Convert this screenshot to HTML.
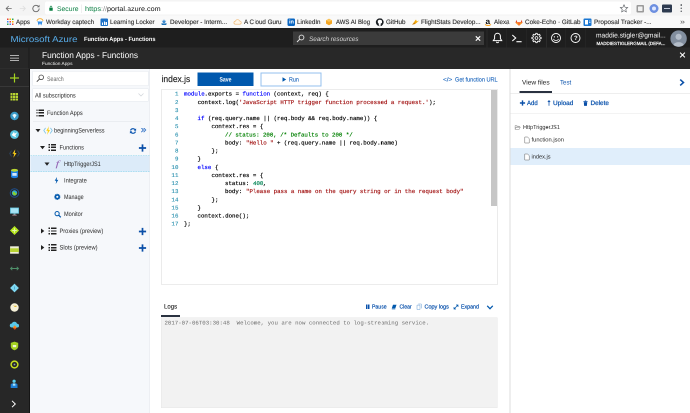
<!DOCTYPE html>
<html><head><meta charset="utf-8"><title>Function Apps - Microsoft Azure</title>
<style>
html,body{margin:0;padding:0;}
body{width:690px;height:413px;position:relative;overflow:hidden;background:#fff;font-family:"Liberation Sans", sans-serif;}
#wrap{will-change:transform;position:absolute;left:0;top:0;width:1380px;height:826px;transform:scale(0.5);transform-origin:0 0;overflow:hidden;}
#root{position:absolute;left:0;top:0;width:690px;height:413px;overflow:hidden;zoom:2;}
#root div,#root span,#root svg{position:absolute;}
#root span{white-space:pre;transform-origin:0 50%;text-rendering:geometricPrecision;}
#root div{box-sizing:border-box;}
</style></head><body><div id="wrap"><div id="root">
<div style="left:0px;top:0px;width:690px;height:15.5px;background:#f4f4f4;"></div>
<div style="left:0px;top:15.5px;width:690px;height:12.4px;background:#f9f9f9;"></div>
<div style="left:45px;top:1.5px;width:586px;height:13px;background:#ffffff;border-radius:2px;"></div>
<div style="left:81.5px;top:4.5px;width:0.5px;height:8.5px;background:#e0e0e0;"></div>
<div style="left:636.5px;top:5px;width:7.5px;height:7.5px;background:#9a9a9a;border-radius:1px;"></div>
<div style="left:638px;top:6.5px;width:4.5px;height:4.5px;background:#f0f0f0;border-radius:0.5px;"></div>
<div style="left:649.5px;top:4px;width:9px;height:9px;background:#6d8fe0;border-radius:5px;"></div>
<div style="left:652px;top:6.5px;width:4px;height:4px;background:#dfe8ff;border-radius:2px;"></div>
<div style="left:662px;top:4.5px;width:10px;height:8px;background:#2d3a4f;border-radius:1px;"></div>
<div style="left:664px;top:8px;width:6px;height:1px;background:#c0c8d8;"></div>
<div style="left:680.3px;top:4.2px;width:1.6px;height:1.6px;background:#5f6368;border-radius:1px;"></div>
<div style="left:680.3px;top:7.4px;width:1.6px;height:1.6px;background:#5f6368;border-radius:1px;"></div>
<div style="left:680.3px;top:10.6px;width:1.6px;height:1.6px;background:#5f6368;border-radius:1px;"></div>
<div style="left:7.0px;top:18.5px;width:1.6px;height:1.6px;background:#ea4335;"></div>
<div style="left:9.4px;top:18.5px;width:1.6px;height:1.6px;background:#fbbc05;"></div>
<div style="left:11.8px;top:18.5px;width:1.6px;height:1.6px;background:#34a853;"></div>
<div style="left:7.0px;top:20.9px;width:1.6px;height:1.6px;background:#4285f4;"></div>
<div style="left:9.4px;top:20.9px;width:1.6px;height:1.6px;background:#ea4335;"></div>
<div style="left:11.8px;top:20.9px;width:1.6px;height:1.6px;background:#fbbc05;"></div>
<div style="left:7.0px;top:23.3px;width:1.6px;height:1.6px;background:#34a853;"></div>
<div style="left:9.4px;top:23.3px;width:1.6px;height:1.6px;background:#4285f4;"></div>
<div style="left:11.8px;top:23.3px;width:1.6px;height:1.6px;background:#ea4335;"></div>
<div style="left:100.5px;top:18.5px;width:7.5px;height:7.5px;background:#1d72c8;border-radius:1px;"></div>
<div style="left:102px;top:22.5px;width:1.2px;height:2.5px;background:#fff;"></div>
<div style="left:103.8px;top:21.3px;width:1.2px;height:3.7px;background:#fff;"></div>
<div style="left:105.6px;top:22px;width:1.2px;height:3px;background:#fff;"></div>
<div style="left:287.5px;top:18.5px;width:7.5px;height:7.5px;background:#0a66c2;border-radius:1.2px;"></div>
<div style="left:583.5px;top:18.5px;width:8px;height:7.5px;background:#1976d2;border-radius:1px;"></div>
<div style="left:585px;top:20px;width:3.2px;height:4.5px;background:#fff;"></div>
<div style="left:589px;top:20.5px;width:1.5px;height:1px;background:#bcd9f5;"></div>
<div style="left:589px;top:22.2px;width:1.5px;height:1px;background:#bcd9f5;"></div>
<div style="left:0px;top:28.1px;width:690px;height:19.6px;background:#1e1e1e;"></div>
<div style="left:0px;top:47.6px;width:690px;height:21.2px;background:#282828;"></div>
<div style="left:0px;top:47.6px;width:28.8px;height:366px;background:#272727;"></div>
<div style="left:28.6px;top:47.6px;width:0.7px;height:21.2px;background:#1a1a1a;"></div>
<div style="left:293px;top:31.5px;width:191px;height:13.5px;background:#3b3b3b;"></div>
<div style="left:486.7px;top:28px;width:0.6px;height:19.6px;background:#2b2b2b;"></div>
<div style="left:505.9px;top:28px;width:0.6px;height:19.6px;background:#2b2b2b;"></div>
<div style="left:526.1px;top:28px;width:0.6px;height:19.6px;background:#2b2b2b;"></div>
<div style="left:546.2px;top:28px;width:0.6px;height:19.6px;background:#2b2b2b;"></div>
<div style="left:564.9000000000001px;top:28px;width:0.6px;height:19.6px;background:#2b2b2b;"></div>
<div style="left:585.4000000000001px;top:28px;width:0.6px;height:19.6px;background:#2b2b2b;"></div>
<div style="left:0px;top:68.5px;width:29px;height:0.6px;background:#333333;"></div>
<div style="left:0px;top:86.2px;width:29px;height:0.6px;background:#383838;"></div>
<div style="left:10.5px;top:93.1px;width:2.2px;height:2.2px;background:#b8d432;"></div>
<div style="left:13.2px;top:93.1px;width:2.2px;height:2.2px;background:#b8d432;"></div>
<div style="left:15.9px;top:93.1px;width:2.2px;height:2.2px;background:#b8d432;"></div>
<div style="left:10.5px;top:95.8px;width:2.2px;height:2.2px;background:#b8d432;"></div>
<div style="left:13.2px;top:95.8px;width:2.2px;height:2.2px;background:#b8d432;"></div>
<div style="left:15.9px;top:95.8px;width:2.2px;height:2.2px;background:#b8d432;"></div>
<div style="left:10.5px;top:98.5px;width:2.2px;height:2.2px;background:#b8d432;"></div>
<div style="left:13.2px;top:98.5px;width:2.2px;height:2.2px;background:#b8d432;"></div>
<div style="left:15.9px;top:98.5px;width:2.2px;height:2.2px;background:#b8d432;"></div>
<div style="left:28.8px;top:68.8px;width:1.2px;height:345px;background:#151515;"></div>
<div style="left:30px;top:68.8px;width:119.5px;height:345px;background:#f6f8fb;"></div>
<div style="left:149.5px;top:69px;width:0.6px;height:344px;background:#e4e7ec;"></div>
<div style="left:32.5px;top:71px;width:116px;height:15px;background:#ffffff;border:0.5px solid #e4e8ee;"></div>
<div style="left:32.5px;top:88.3px;width:116px;height:13.2px;background:#ffffff;border:0.5px solid #e4e8ee;"></div>
<div style="left:36.3px;top:109.5px;width:1.4px;height:1.4px;background:#222;"></div>
<div style="left:38.599999999999994px;top:109.5px;width:5.4px;height:1.4px;background:#222;"></div>
<div style="left:36.3px;top:112.2px;width:1.4px;height:1.4px;background:#222;"></div>
<div style="left:38.599999999999994px;top:112.2px;width:5.4px;height:1.4px;background:#222;"></div>
<div style="left:36.3px;top:114.9px;width:1.4px;height:1.4px;background:#222;"></div>
<div style="left:38.599999999999994px;top:114.9px;width:5.4px;height:1.4px;background:#222;"></div>
<div style="left:33px;top:121px;width:108px;height:0.5px;background:#dfe3e8;"></div>
<div style="left:48.5px;top:144.0px;width:1.4px;height:1.4px;background:#222;"></div>
<div style="left:50.8px;top:144.0px;width:5.4px;height:1.4px;background:#222;"></div>
<div style="left:48.5px;top:146.7px;width:1.4px;height:1.4px;background:#222;"></div>
<div style="left:50.8px;top:146.7px;width:5.4px;height:1.4px;background:#222;"></div>
<div style="left:48.5px;top:149.4px;width:1.4px;height:1.4px;background:#222;"></div>
<div style="left:50.8px;top:149.4px;width:5.4px;height:1.4px;background:#222;"></div>
<div style="left:30.3px;top:155.5px;width:119.2px;height:16.4px;background:#dcebf9;border-top:0.8px dashed #7fd3ea;border-bottom:0.8px dashed #7fd3ea;"></div>
<div style="left:48.7px;top:227.6px;width:1.4px;height:1.4px;background:#222;"></div>
<div style="left:51.0px;top:227.6px;width:5.4px;height:1.4px;background:#222;"></div>
<div style="left:48.7px;top:230.29999999999998px;width:1.4px;height:1.4px;background:#222;"></div>
<div style="left:51.0px;top:230.29999999999998px;width:5.4px;height:1.4px;background:#222;"></div>
<div style="left:48.7px;top:233.0px;width:1.4px;height:1.4px;background:#222;"></div>
<div style="left:51.0px;top:233.0px;width:5.4px;height:1.4px;background:#222;"></div>
<div style="left:48.7px;top:244.2px;width:1.4px;height:1.4px;background:#222;"></div>
<div style="left:51.0px;top:244.2px;width:5.4px;height:1.4px;background:#222;"></div>
<div style="left:48.7px;top:246.89999999999998px;width:1.4px;height:1.4px;background:#222;"></div>
<div style="left:51.0px;top:246.89999999999998px;width:5.4px;height:1.4px;background:#222;"></div>
<div style="left:48.7px;top:249.6px;width:1.4px;height:1.4px;background:#222;"></div>
<div style="left:51.0px;top:249.6px;width:5.4px;height:1.4px;background:#222;"></div>
<div style="left:197.6px;top:72.4px;width:56.1px;height:13.8px;background:#0058ad;"></div>
<div style="left:260.3px;top:72.3px;width:61px;height:14px;background:#ffffff;border:1px solid #94c0ee;"></div>
<div style="left:161px;top:89.5px;width:336.8px;height:194.9px;background:#ffffff;border:0.6px solid #d8d8d8;"></div>
<div style="left:490.8px;top:90px;width:6.4px;height:116px;background:#c6c6c6;"></div>
<div style="left:161.1px;top:315px;width:18.9px;height:2px;background:#2a3240;"></div>
<div style="left:161.1px;top:317.3px;width:336.6px;height:90.5px;background:#f2f2f2;border:0.5px solid #e6e6e6;"></div>
<div style="left:366px;top:304.5px;width:1.3px;height:4.6px;background:#0a52ac;"></div>
<div style="left:368px;top:304.5px;width:1.3px;height:4.6px;background:#0a52ac;"></div>
<div style="left:509.7px;top:69px;width:0.7px;height:344px;background:#dcdcdc;"></div>
<div style="left:519.4px;top:91.1px;width:32.8px;height:1.9px;background:#2a3240;"></div>
<div style="left:510.4px;top:93.1px;width:180px;height:0.5px;background:#dcdcdc;"></div>
<div style="left:510.4px;top:113px;width:180px;height:0.5px;background:#e6e6e6;"></div>
<div style="left:510.4px;top:148.1px;width:180px;height:16.7px;background:#e0eefb;"></div>
<svg style="left:3px;top:2.7px;" width="12" height="12" viewBox="0 0 12 12"><path d="M8.700 6H3.300M5.700 3.500L3.200 6l2.500 2.500" fill="none" stroke="#6a6a6a" stroke-width="0.850"/></svg>
<svg style="left:16.5px;top:2.7px;" width="12" height="12" viewBox="0 0 12 12"><path d="M3.300 6h5.400M6.300 3.500L8.800 6 6.300 8.500" fill="none" stroke="#dedede" stroke-width="0.850"/></svg>
<svg style="left:30px;top:2.7px;" width="12" height="12" viewBox="0 0 12 12"><path d="M9.200 6a3.200 3.200 0 1 1-1-2.300" fill="none" stroke="#666" stroke-width="0.900"/><path d="M9.500 2.300v2.400H7.100z" fill="#666"/></svg>
<svg style="left:48px;top:4.5px;" width="6" height="8" viewBox="0 0 6 8"><rect x="1.300" y="3.300" width="3.400" height="3" rx="0.300" fill="#0b8043"/><path d="M2.100 3.300V2.500a.9.900 0 0 1 1.800 0v.8" fill="none" stroke="#0b8043" stroke-width="0.600"/></svg>
<svg style="left:619px;top:3.4px;" width="10" height="10" viewBox="0 0 10 10"><path d="M5 1.300l1.100 2.400 2.600.3-1.900 1.800.5 2.600L5 7.100 2.700 8.400l.5-2.600-1.900-1.800 2.600-.3z" fill="none" stroke="#5f6368" stroke-width="0.650"/></svg>
<svg style="left:36px;top:17.7px;" width="8" height="8" viewBox="0 0 8 8"><circle cx="4" cy="4" r="3.400" fill="#fff"/><path d="M.9 3.600A3.200 3.200 0 0 1 7.100 3.600" fill="none" stroke="#f5a623" stroke-width="0.800"/><path d="M1.900 3.700l1 3 1.100-2.600 1.100 2.600 1-3" fill="none" stroke="#0875e1" stroke-width="0.900"/></svg>
<svg style="left:160px;top:18px;" width="8" height="8" viewBox="0 0 8 8"><path d="M1 5.5h6l-1 1.5H2z" fill="#1b6fb5"/><path d="M4 1.2l.7 1.5 1.6.2-1.2 1.1.3 1.6L4 4.8l-1.4.8.3-1.6-1.2-1.1 1.6-.2z" fill="#3a8ad0"/></svg>
<svg style="left:233px;top:18px;" width="9" height="8" viewBox="0 0 9 8"><path d="M2.3 6.2a1.5 1.5 0 0 1 .2-3 2.1 2.1 0 0 1 4-.2 1.6 1.6 0 0 1 .2 3.2z" fill="#fff7ea" stroke="#f0b46a" stroke-width="0.6"/></svg>
<svg style="left:325px;top:18px;" width="8" height="8" viewBox="0 0 8 8"><path d="M4 .8l3 1.6v3.2L4 7.2 1 5.6V2.4z" fill="#f5a623"/><path d="M4 .8l3 1.6L4 4 1 2.4z" fill="#fbc45a"/></svg>
<svg style="left:375.5px;top:18px;" width="8.5" height="8.5" viewBox="0 0 8.5 8.5"><circle cx="4.25" cy="4.25" r="3.9" fill="#1b1f23"/><path d="M3.2 8V6.6c-1.2.3-1.5-.6-1.5-.6M5.3 8V6.4c0-.4-.1-.7-.3-.8 1-.1 2-.5 2-2.1 0-.5-.2-.9-.5-1.2.1-.2.2-.7 0-1.100 0 0-.4-.1-1.200.5a4 4 0 0 0-2.100 0C2.400 1.100 2 1.200 2 1.200c-.2.400-.1.900 0 1.100-.3.300-.5.700-.5 1.200 0 1.600 1 2 2 2.100-.2.100-.3.400-.3.700" fill="#fff" stroke="none" opacity="0"/><circle cx="4.25" cy="3.7" r="2" fill="#fff"/><rect x="3.3" y="5" width="1.9" height="2.8" fill="#fff"/></svg>
<svg style="left:411px;top:18px;" width="9" height="8" viewBox="0 0 9 8"><path d="M1 6.8L5 1.500l.800 2L8.200 2.500 4.200 6l-.6-1.700z" fill="#f5a800"/><path d="M1 6.800l2.600-2.500.6 1.700z" fill="#c77700"/></svg>
<svg style="left:484.5px;top:24.2px;" width="7" height="2.5" viewBox="0 0 7 2.5"><path d="M.5.500c2 1.400 4 1.400 6 0" fill="none" stroke="#f90" stroke-width="0.8"/></svg>
<svg style="left:514.5px;top:18px;" width="9" height="8.5" viewBox="0 0 9 8.5"><path d="M4.500 7.800L1 4.800l.9-3 .9 2.400h3.400L7.100 1.800l.9 3z" fill="#e24329"/><path d="M4.500 7.800L2.800 4.200h3.400z" fill="#fc6d26"/><path d="M1 4.800l3.500 3-1.700-3.600zM8 4.800l-3.500 3 1.700-3.600z" fill="#fca326"/></svg>
<svg style="left:295.5px;top:33.5px;" width="10" height="10" viewBox="0 0 10 10"><circle cx="6" cy="4" r="2.400" fill="none" stroke="#e6e6e6" stroke-width="0.9"/><path d="M4.300 5.700L1.500 8.500" stroke="#e6e6e6" stroke-width="1"/></svg>
<svg style="left:474px;top:34.5px;" width="8" height="8" viewBox="0 0 8 8"><path d="M1.800 1.800l4.400 4.400M6.200 1.800L1.800 6.200" stroke="#fff" stroke-width="1.100"/></svg>
<svg style="left:491.3px;top:32px;" width="12" height="12" viewBox="0 0 12 12"><path d="M6 1.300c-1.800 0-2.900 1.300-2.900 3v2.300L1.800 8.600h8.400L8.900 6.600V4.300c0-1.700-1.100-3-2.900-3z" fill="none" stroke="#fff" stroke-width="1"/><path d="M5 9.700a1 1 0 0 0 2 0" fill="none" stroke="#fff" stroke-width="0.900"/></svg>
<svg style="left:510.8px;top:32px;" width="12" height="12" viewBox="0 0 12 12"><path d="M1.300 3l3.400 3-3.400 3" fill="none" stroke="#fff" stroke-width="1.100"/><path d="M5.400 9.700h5.200" stroke="#fff" stroke-width="1.100"/></svg>
<svg style="left:530.4px;top:32px;" width="12" height="12" viewBox="0 0 12 12"><path d="M9.40 5.15L10.64 5.26L10.64 6.74L9.40 6.85L9.00 7.80L9.80 8.76L8.76 9.80L7.80 9.00L6.85 9.40L6.74 10.64L5.26 10.64L5.15 9.40L4.20 9.00L3.24 9.80L2.20 8.76L3.00 7.80L2.60 6.85L1.36 6.74L1.36 5.26L2.60 5.15L3.00 4.20L2.20 3.24L3.24 2.20L4.20 3.00L5.15 2.60L5.26 1.36L6.74 1.36L6.85 2.60L7.80 3.00L8.76 2.20L9.80 3.24L9.00 4.20z" fill="none" stroke="#fff" stroke-width="0.850" stroke-linejoin="round"/><circle cx="6" cy="6" r="1.400" fill="none" stroke="#fff" stroke-width="0.800"/></svg>
<svg style="left:549.9px;top:32px;" width="12" height="12" viewBox="0 0 12 12"><circle cx="6" cy="6" r="4.500" fill="none" stroke="#fff" stroke-width="0.900"/><circle cx="4.400" cy="4.900" r="0.650" fill="#fff"/><circle cx="7.600" cy="4.900" r="0.650" fill="#fff"/><path d="M3.500 6.900a2.700 2.700 0 0 0 5 0" fill="none" stroke="#fff" stroke-width="0.800"/></svg>
<svg style="left:569.7px;top:32px;" width="12" height="12" viewBox="0 0 12 12"><circle cx="6" cy="6" r="4.500" fill="none" stroke="#fff" stroke-width="0.900"/></svg>
<svg style="left:670.1px;top:29.8px;" width="17.2" height="17.2" viewBox="0 0 17.2 17.2"><circle cx="8.600" cy="8.600" r="8.200" fill="#828e9e"/><circle cx="8.600" cy="6.800" r="3.100" fill="#b4bdc9"/><path d="M3.400 14.900A5.600 4.400 0 0 1 13.800 14.900A8.200 8.200 0 0 1 3.400 14.900z" fill="#b4bdc9"/></svg>
<svg style="left:9.4px;top:54px;" width="10" height="8" viewBox="0 0 10 8"><path d="M.5 1.600h9M.5 4.100h9M.5 6.600h9" stroke="#e0e0e0" stroke-width="0.700"/></svg>
<svg style="left:678px;top:50.4px;" width="9" height="9" viewBox="0 0 9 9"><path d="M2.100 2.100l4.800 4.800M6.900 2.100L2.100 6.900" stroke="#fff" stroke-width="1.050"/></svg>
<svg style="left:8.4px;top:72.2px;" width="12" height="12" viewBox="0 0 12 12"><path d="M6 1.500v9M1.500 6h9" stroke="#a4d321" stroke-width="1.200"/></svg>
<svg style="left:8.4px;top:109.8px;" width="12" height="12" viewBox="0 0 12 12"><circle cx="6" cy="6" r="4.200" fill="#3999c6"/><path d="M3.800 5l2.200-1.300L8.200 5 6 8.500z" fill="#e8f6fc"/></svg>
<svg style="left:8.4px;top:128.5px;" width="12" height="12" viewBox="0 0 12 12"><circle cx="6" cy="6" r="4.400" fill="#59c4e0"/><path d="M3.200 6.500l2.300-3.300.7 1.900 2.600-1.300-2 3.200 1.100 1.700-2.900-.9z" fill="#fff"/></svg>
<svg style="left:8.4px;top:147.5px;" width="12" height="12" viewBox="0 0 12 12"><path d="M3 3L1.200 6 3 9M9 3l1.800 3L9 9" fill="none" stroke="#2f4560" stroke-width="0.900"/><path d="M6.800 1.800L4 6.300h1.700L4.900 10.200 8 5.500H6.200z" fill="#fcd116"/></svg>
<svg style="left:8.4px;top:167.4px;" width="12" height="12" viewBox="0 0 12 12"><path d="M2.500 2.800v6.400c0 .8 1.600 1.400 3.500 1.400s3.500-.6 3.500-1.400V2.800z" fill="#1e7fe0"/><ellipse cx="6" cy="2.800" rx="3.500" ry="1.400" fill="#b8d432"/><rect x="3.800" y="5.500" width="4.400" height="2.800" fill="#e8f2ff" opacity="0.9"/></svg>
<svg style="left:8.4px;top:186.8px;" width="12" height="12" viewBox="0 0 12 12"><circle cx="6" cy="6" r="4.300" fill="none" stroke="#1f4e8c" stroke-width="1"/><circle cx="6" cy="6" r="2.700" fill="#2fa8d8"/><path d="M4.200 5.200c1-.8 2-.4 2.400.4s1.200.8 1.600 0c.3 1.500-.7 2.700-1.900 2.700S4.400 7.500 4.200 6.400z" fill="#8ad02a"/></svg>
<svg style="left:8.4px;top:205.7px;" width="12" height="12" viewBox="0 0 12 12"><rect x="1.600" y="2.100" width="8.800" height="6" fill="#6fd0ea"/><rect x="2.500" y="2.900" width="7" height="4.400" fill="#a8e4f5"/><rect x="5" y="8.100" width="2" height="1.200" fill="#8aa"/><rect x="3.800" y="9.300" width="4.400" height="0.700" fill="#c9a"/></svg>
<svg style="left:8.4px;top:224.5px;" width="12" height="12" viewBox="0 0 12 12"><path d="M6 1.500L10.500 6 6 10.500 1.500 6z" fill="#b5e61d"/><path d="M6 3.800v4.400M3.800 6h4.400" stroke="#e8f8b0" stroke-width="0.900"/></svg>
<svg style="left:8.4px;top:244.2px;" width="12" height="12" viewBox="0 0 12 12"><rect x="1.600" y="2.300" width="8.700" height="7.400" fill="#eeeed8"/><rect x="1.600" y="4.300" width="8.700" height="3.700" fill="#b8d432"/></svg>
<svg style="left:8.4px;top:262.7px;" width="12" height="12" viewBox="0 0 12 12"><path d="M2.500 6h7M3.800 4.300L2 6l1.800 1.700M8.200 4.300L10 6 8.200 7.700" fill="none" stroke="#4f8f6a" stroke-width="0.900"/></svg>
<svg style="left:8.4px;top:282.1px;" width="12" height="12" viewBox="0 0 12 12"><path d="M6 1.600L10.400 6 6 10.400 1.600 6z" fill="#7fd8f2"/><path d="M6 4.500v3" stroke="#3a9cc8" stroke-width="0.700"/></svg>
<svg style="left:8.4px;top:301.3px;" width="12" height="12" viewBox="0 0 12 12"><circle cx="6" cy="6" r="4.200" fill="#f4f0d8"/><path d="M5.800 5h2.200" stroke="#e0b020" stroke-width="0.900"/><path d="M4.500 4.300a2.500 2.500 0 0 1 3.700.5" fill="none" stroke="#e8d890" stroke-width="0.600"/></svg>
<svg style="left:8.4px;top:320px;" width="12" height="12" viewBox="0 0 12 12"><path d="M3.200 7.500a2 2 0 0 1 .2-4 2.700 2.700 0 0 1 5.100.2A1.900 1.900 0 0 1 8.800 7.500z" fill="#59c8e8"/><path d="M6.300 5.300L8.300 7.500 6.300 9.700 4.300 7.500z" fill="#f58a1f"/><path d="M6.300 7.500l1 1.100-1 1.100-1-1.100z" fill="#e03a1e"/></svg>
<svg style="left:8.4px;top:340px;" width="12" height="12" viewBox="0 0 12 12"><path d="M6 1.600l3.700 1.300v3.400c0 2-1.600 3.300-3.700 4-2.100-.7-3.700-2-3.700-4V2.900z" fill="#a4d321"/><rect x="4.300" y="5" width="3.400" height="2.200" fill="#eef8d0"/></svg>
<svg style="left:8.4px;top:358.7px;" width="12" height="12" viewBox="0 0 12 12"><circle cx="6" cy="6" r="3.400" fill="#2a2a2a" stroke="#c8e020" stroke-width="1.500"/><circle cx="6" cy="6" r="0.900" fill="#8aa0b8"/></svg>
<svg style="left:8.4px;top:378.1px;" width="12" height="12" viewBox="0 0 12 12"><circle cx="5.600" cy="3.200" r="1.600" fill="#59d0f0"/><path d="M2.200 10V6.800c0-1 1.200-1.500 3.400-1.500s3.400.5 3.400 1.500V10z" fill="#1e7fd6"/><path d="M4.300 5.500h2.600v2.200H4.300z" fill="#a8e4fa"/></svg>
<svg style="left:9px;top:399px;" width="9" height="10" viewBox="0 0 9 10"><path d="M3 1.800l3.300 3.200L3 8.200" fill="none" stroke="#fff" stroke-width="1"/></svg>
<svg style="left:35px;top:73.5px;" width="10" height="10" viewBox="0 0 10 10"><circle cx="6.200" cy="3.800" r="2.300" fill="none" stroke="#444" stroke-width="0.800"/><path d="M4.600 5.400L1.800 8.200" stroke="#444" stroke-width="0.900"/></svg>
<svg style="left:137px;top:92px;" width="8" height="6" viewBox="0 0 8 6"><path d="M1.500 1.500L4 4l2.500-2.500" fill="none" stroke="#d0d4da" stroke-width="0.700"/></svg>
<svg style="left:35px;top:128.0px;" width="6" height="5" viewBox="0 0 6 5"><path d="M.5 1h5L3 4.300z" fill="#222"/></svg>
<svg style="left:42.8px;top:125.3px;" width="10" height="10" viewBox="0 0 10 10"><path d="M2.800 2L.8 5l2 3M7.200 2l2 3-2 3" fill="none" stroke="#7cc4e8" stroke-width="0.800"/><path d="M5.900 .8L3.300 5.400h1.600L4.100 9.200 7 4.500H5.400z" fill="#fcd116"/></svg>
<svg style="left:128.9px;top:126.9px;" width="8" height="8" viewBox="0 0 8 8"><path d="M6.300 3.200A2.600 2.600 0 0 0 1.500 3.400M1.700 4.800A2.600 2.600 0 0 0 6.500 4.600" fill="none" stroke="#0a55b0" stroke-width="1.200"/><path d="M7.100 1.400v2.300H4.800zM.9 6.600V4.300h2.300z" fill="#0a55b0"/></svg>
<svg style="left:140.4px;top:126.8px;" width="6" height="6" viewBox="0 0 6 6"><path d="M.8 .8L2.900 3 .8 5.200M3.100 .8L5.200 3 3.100 5.200" fill="none" stroke="#3a78c8" stroke-width="0.950"/></svg>
<svg style="left:39.6px;top:145.0px;" width="6" height="5" viewBox="0 0 6 5"><path d="M.5 1h5L3 4.300z" fill="#222"/></svg>
<svg style="left:138.6px;top:143.8px;" width="8" height="8" viewBox="0 0 8 8"><path d="M4 .4v7.200M.4 4h7.200" stroke="#0a4fa8" stroke-width="1.700"/></svg>
<svg style="left:44px;top:161.7px;" width="6" height="5" viewBox="0 0 6 5"><path d="M.5 1h5L3 4.300z" fill="#222"/></svg>
<svg style="left:53.5px;top:176.5px;" width="6" height="8" viewBox="0 0 6 8"><path d="M3.500 .5L1.200 4.200h1.600L2.200 7.500 4.800 3.400H3.200z" fill="#0058ad"/></svg>
<svg style="left:53.9px;top:193.7px;" width="6.6" height="6.6" viewBox="0 0 6.6 6.6"><circle cx="3.300" cy="3.300" r="1.900" fill="none" stroke="#0058ad" stroke-width="1.600"/><circle cx="3.300" cy="3.300" r="2.800" fill="none" stroke="#0058ad" stroke-width="0.600" stroke-dasharray="0.900 0.850"/></svg>
<svg style="left:53.8px;top:210.3px;" width="7.5" height="7.5" viewBox="0 0 7.5 7.5"><circle cx="3.100" cy="3.100" r="2.100" fill="none" stroke="#0058ad" stroke-width="1"/><path d="M4.700 4.700l2.100 2.100" stroke="#0058ad" stroke-width="1.200"/></svg>
<svg style="left:39.8px;top:228px;" width="5" height="6" viewBox="0 0 5 6"><path d="M1 .5v5L4.300 3z" fill="#222"/></svg>
<svg style="left:138.5px;top:227.3px;" width="8" height="8" viewBox="0 0 8 8"><path d="M4 .4v7.200M.4 4h7.200" stroke="#0a4fa8" stroke-width="1.700"/></svg>
<svg style="left:39.8px;top:244.6px;" width="5" height="6" viewBox="0 0 5 6"><path d="M1 .5v5L4.300 3z" fill="#222"/></svg>
<svg style="left:138.5px;top:244px;" width="8" height="8" viewBox="0 0 8 8"><path d="M4 .4v7.200M.4 4h7.200" stroke="#0a4fa8" stroke-width="1.700"/></svg>
<svg style="left:282px;top:77px;" width="4.5" height="5" viewBox="0 0 4.5 5"><path d="M.5 .3v4.400L4.200 2.500z" fill="#0058ad"/></svg>
<svg style="left:391.5px;top:304px;" width="5.5" height="5.5" viewBox="0 0 5.5 5.5"><path d="M1.500 .8h3.500l-1.200 3.600H.3z" fill="#0058ad"/><path d="M.3 5h3.500" stroke="#0058ad" stroke-width="0.600"/></svg>
<svg style="left:416.5px;top:303.5px;" width="6" height="7" viewBox="0 0 6 7"><path d="M.5 1.600h3v4.400h-3zM1.800 .5h3v4.400" fill="none" stroke="#6a9fd4" stroke-width="0.500"/></svg>
<svg style="left:453px;top:304px;" width="6" height="6" viewBox="0 0 6 6"><path d="M1 5L5 1M3 1h2v2M1 3v2h2" fill="none" stroke="#0058ad" stroke-width="0.700"/></svg>
<svg style="left:486px;top:304.5px;" width="8" height="6" viewBox="0 0 8 6"><path d="M1.200 1.300L4 4.200l2.800-2.900" fill="none" stroke="#0058ad" stroke-width="1.200"/></svg>
<svg style="left:677.7px;top:78px;" width="8" height="9" viewBox="0 0 8 9"><path d="M2.700 1.600L6 4.500 2.700 7.400" fill="none" stroke="#0a4fa8" stroke-width="1.500"/></svg>
<svg style="left:519.4px;top:99.9px;" width="6" height="6" viewBox="0 0 6 6"><path d="M3 .4v5.200M.4 3h5.200" stroke="#0a4fa8" stroke-width="1.400"/></svg>
<svg style="left:546.6px;top:99.7px;" width="5" height="7" viewBox="0 0 5 7"><path d="M2.500 6.200V1.200M1.300 2.500L2.500 1.100l1.200 1.400" fill="none" stroke="#0a4fa8" stroke-width="0.750"/></svg>
<svg style="left:582.6px;top:99.8px;" width="6" height="7" viewBox="0 0 6 7"><path d="M1.300 2.100h3.400l-.3 3.800H1.600z" fill="#0a4fa8"/><path d="M.9 1.500h4.200M2.300 .8h1.400" stroke="#0a4fa8" stroke-width="0.650"/></svg>
<svg style="left:514.5px;top:124.3px;" width="7" height="6" viewBox="0 0 7 6"><path d="M.6 4.800V1h1.700l.5.700h2.100v.8M.6 4.800l.9-2.300h4.200l-.9 2.300z" fill="none" stroke="#777" stroke-width="0.450"/></svg>
<svg style="left:523.8px;top:136.4px;" width="6" height="7" viewBox="0 0 6 7"><path d="M.8 .5h2.800l1.600 1.600v4.400H.8z" fill="#fff" stroke="#666" stroke-width="0.500"/></svg>
<svg style="left:523.8px;top:153.6px;" width="6" height="7" viewBox="0 0 6 7"><path d="M.8 .5h2.800l1.600 1.600v4.400H.8z" fill="#fff" stroke="#666" stroke-width="0.500"/></svg>
<span style='left:57px;top:4.96px;font-size:6.7px;line-height:8.04px;color:#0b8043;transform:scaleX(1.0140);'>Secure</span>
<span style='left:85px;top:4.96px;font-size:6.7px;line-height:8.04px;color:#0b8043;transform:scaleX(1.1034);'>https</span>
<span style='left:101px;top:4.96px;font-size:6.7px;line-height:8.04px;color:#888;transform:scaleX(1.0756);'>://</span>
<span style='left:107px;top:4.96px;font-size:6.7px;line-height:8.04px;color:#111;transform:scaleX(1.0740);'>portal.azure.com</span>
<span style='left:16px;top:17.84px;font-size:6.4px;line-height:7.68px;color:#2a2a2a;transform:scaleX(0.9603);-webkit-text-stroke:0.12px;'>Apps</span>
<span style='left:46px;top:17.84px;font-size:6.4px;line-height:7.68px;color:#2a2a2a;transform:scaleX(0.9743);-webkit-text-stroke:0.12px;'>Workday captech</span>
<span style='left:110px;top:17.84px;font-size:6.4px;line-height:7.68px;color:#2a2a2a;transform:scaleX(0.9707);-webkit-text-stroke:0.12px;'>Learning Locker</span>
<span style='left:170px;top:17.84px;font-size:6.4px;line-height:7.68px;color:#2a2a2a;transform:scaleX(0.9785);-webkit-text-stroke:0.12px;'>Developer - Interm...</span>
<span style='left:244px;top:17.84px;font-size:6.4px;line-height:7.68px;color:#2a2a2a;transform:scaleX(0.9772);-webkit-text-stroke:0.12px;'>A Cloud Guru</span>
<span style='left:288.8px;top:19.11px;font-size:5.6px;line-height:6.72px;color:#fff;font-weight:bold;transform:scaleX(1.0031);'>in</span>
<span style='left:297px;top:17.84px;font-size:6.4px;line-height:7.68px;color:#2a2a2a;transform:scaleX(0.9722);-webkit-text-stroke:0.12px;'>LinkedIn</span>
<span style='left:336px;top:17.84px;font-size:6.4px;line-height:7.68px;color:#2a2a2a;transform:scaleX(0.9351);-webkit-text-stroke:0.12px;'>AWS AI Blog</span>
<span style='left:386px;top:17.84px;font-size:6.4px;line-height:7.68px;color:#2a2a2a;transform:scaleX(0.9804);-webkit-text-stroke:0.12px;'>GitHub</span>
<span style='left:421px;top:17.84px;font-size:6.4px;line-height:7.68px;color:#2a2a2a;transform:scaleX(0.9794);-webkit-text-stroke:0.12px;'>FlightStats Develop...</span>
<span style='left:485.5px;top:16.90px;font-size:8px;line-height:9.6px;color:#111;font-weight:bold;transform:scaleX(1.0330);'>a</span>
<span style='left:494px;top:17.84px;font-size:6.4px;line-height:7.68px;color:#2a2a2a;transform:scaleX(0.9688);-webkit-text-stroke:0.12px;'>Alexa</span>
<span style='left:525px;top:17.84px;font-size:6.4px;line-height:7.68px;color:#2a2a2a;transform:scaleX(0.9889);-webkit-text-stroke:0.12px;'>Coke-Echo · GitLab</span>
<span style='left:594px;top:17.84px;font-size:6.4px;line-height:7.68px;color:#2a2a2a;transform:scaleX(0.9992);-webkit-text-stroke:0.12px;'>Proposal Tracker -...</span>
<span style='left:680px;top:17.68px;font-size:7px;line-height:8.4px;color:#555;transform:scaleX(1.2800);'>»</span>
<span style='left:10.5px;top:33.79px;font-size:8.6px;line-height:10.32px;color:#5ab0ee;transform:scaleX(1.1311);'>Microsoft Azure</span>
<span style='left:83.9px;top:35.32px;font-size:6.0px;line-height:7.2px;color:#ffffff;font-weight:bold;transform:scaleX(0.9435);'>Function Apps - Functions</span>
<span style='left:308.9px;top:34.83px;font-size:6.5px;line-height:7.8px;color:#d8d8d8;font-style:italic;transform:scaleX(0.9734);'>Search resources</span>
<span style='left:573.9px;top:34.40px;font-size:6.3px;line-height:7.56px;color:#fff;font-weight:bold;transform:scaleX(0.9587);'>?</span>
<span style='left:595.8px;top:31.54px;font-size:6.9px;line-height:8.28px;color:#ffffff;transform:scaleX(0.9652);'>maddie.stigler@gmail...</span>
<span style='left:596.5px;top:40.75px;font-size:4.5px;line-height:5.4px;color:#ffffff;transform:scaleX(1.0006);-webkit-text-stroke:0.18px;'>MADDIESTIGLERGMAIL (DEFA...</span>
<span style='left:42px;top:50.55px;font-size:8.5px;line-height:10.2px;color:#ffffff;transform:scaleX(0.9768);'>Function Apps - Functions</span>
<span style='left:42.2px;top:61.15px;font-size:4.5px;line-height:5.4px;color:#f0f0f0;transform:scaleX(1.0690);'>Function Apps</span>
<span style='left:46.9px;top:75.14px;font-size:6.4px;line-height:7.68px;color:#6a6a6a;transform:scaleX(0.8247);'>Search</span>
<span style='left:35px;top:91.54px;font-size:6.4px;line-height:7.68px;color:#2b2b2b;transform:scaleX(0.8812);'>All subscriptions</span>
<span style='left:46.9px;top:108.94px;font-size:6.4px;line-height:7.68px;color:#2b2b2b;transform:scaleX(0.8790);'>Function Apps</span>
<span style='left:54.2px;top:126.69px;font-size:6.4px;line-height:7.68px;color:#2b2b2b;transform:scaleX(0.8721);'>beginningServerless</span>
<span style='left:59.3px;top:143.29px;font-size:6.4px;line-height:7.68px;color:#2b2b2b;transform:scaleX(0.8803);'>Functions</span>
<span style='left:55.6px;top:158.90px;font-size:8.5px;line-height:10.2px;color:#9565b5;font-style:italic;font-family:"Liberation Serif", serif;transform:scaleX(1.6000);'>f</span>
<span style='left:64px;top:160.04px;font-size:6.4px;line-height:7.68px;color:#2b2b2b;transform:scaleX(0.8585);'>HttpTriggerJS1</span>
<span style='left:63.8px;top:176.64px;font-size:6.4px;line-height:7.68px;color:#2b2b2b;transform:scaleX(0.9035);'>Integrate</span>
<span style='left:63.8px;top:193.24px;font-size:6.4px;line-height:7.68px;color:#2b2b2b;transform:scaleX(0.8481);'>Manage</span>
<span style='left:63.8px;top:210.04px;font-size:6.4px;line-height:7.68px;color:#2b2b2b;transform:scaleX(0.8727);'>Monitor</span>
<span style='left:59.3px;top:227.04px;font-size:6.4px;line-height:7.68px;color:#2b2b2b;transform:scaleX(0.8851);'>Proxies (preview)</span>
<span style='left:59.3px;top:243.64px;font-size:6.4px;line-height:7.68px;color:#2b2b2b;transform:scaleX(0.8991);'>Slots (preview)</span>
<span style='left:161.5px;top:73.91px;font-size:9.0px;line-height:10.8px;color:#222;transform:scaleX(0.9438);-webkit-text-stroke:0.15px;'>index.js</span>
<span style='left:219.7px;top:75.95px;font-size:6.3px;line-height:7.56px;color:#ffffff;font-weight:bold;transform:scaleX(0.8153);'>Save</span>
<span style='left:289.2px;top:75.85px;font-size:6.2px;line-height:7.44px;color:#2a6fc0;transform:scaleX(0.8715);-webkit-text-stroke:0.15px;'>Run</span>
<span style='left:442.8px;top:75.91px;font-size:6.1px;line-height:7.32px;color:#2a6fc0;transform:scaleX(1.0553);-webkit-text-stroke:0.15px;'>&lt;/&gt;</span>
<span style='left:455px;top:75.91px;font-size:6.1px;line-height:7.32px;color:#2a6fc0;transform:scaleX(0.9112);-webkit-text-stroke:0.15px;'>Get function URL</span>
<span style='left:175.148px;top:91.22px;font-size:5.75px;line-height:6.9px;color:#2b91af;font-family:"Liberation Mono", monospace;transform:scaleX(0.9997);-webkit-text-stroke:0.12px;'>1</span>
<span style='left:183.8px;top:91.22px;font-size:5.75px;line-height:6.9px;color:#0000ff;font-family:"Liberation Mono", monospace;transform:scaleX(0.9996);-webkit-text-stroke:0.18px;'>module</span>
<span style='left:204.51px;top:91.22px;font-size:5.75px;line-height:6.9px;color:#000000;font-family:"Liberation Mono", monospace;transform:scaleX(1.0000);-webkit-text-stroke:0.18px;'>.exports = </span>
<span style='left:242.48px;top:91.22px;font-size:5.75px;line-height:6.9px;color:#0000ff;font-family:"Liberation Mono", monospace;transform:scaleX(1.0004);-webkit-text-stroke:0.18px;'>function</span>
<span style='left:273.55px;top:91.22px;font-size:5.75px;line-height:6.9px;color:#000000;font-family:"Liberation Mono", monospace;transform:scaleX(1.0002);-webkit-text-stroke:0.18px;'>(context, req) {</span>
<span style='left:175.148px;top:99.34px;font-size:5.75px;line-height:6.9px;color:#2b91af;font-family:"Liberation Mono", monospace;transform:scaleX(0.9997);-webkit-text-stroke:0.12px;'>2</span>
<span style='left:197.61px;top:99.34px;font-size:5.75px;line-height:6.9px;color:#000000;font-family:"Liberation Mono", monospace;transform:scaleX(1.0000);-webkit-text-stroke:0.18px;'>context.log(</span>
<span style='left:239.03px;top:99.34px;font-size:5.75px;line-height:6.9px;color:#a31515;font-family:"Liberation Mono", monospace;transform:scaleX(1.0004);-webkit-text-stroke:0.18px;'>&#x27;JavaScript HTTP trigger function processed a request.&#x27;</span>
<span style='left:428.89px;top:99.34px;font-size:5.75px;line-height:6.9px;color:#000000;font-family:"Liberation Mono", monospace;transform:scaleX(0.9991);-webkit-text-stroke:0.18px;'>);</span>
<span style='left:175.148px;top:107.47px;font-size:5.75px;line-height:6.9px;color:#2b91af;font-family:"Liberation Mono", monospace;transform:scaleX(0.9997);-webkit-text-stroke:0.12px;'>3</span>
<span style='left:175.148px;top:115.59px;font-size:5.75px;line-height:6.9px;color:#2b91af;font-family:"Liberation Mono", monospace;transform:scaleX(0.9997);-webkit-text-stroke:0.12px;'>4</span>
<span style='left:197.61px;top:115.59px;font-size:5.75px;line-height:6.9px;color:#0000ff;font-family:"Liberation Mono", monospace;transform:scaleX(0.9991);-webkit-text-stroke:0.18px;'>if</span>
<span style='left:207.96px;top:115.59px;font-size:5.75px;line-height:6.9px;color:#000000;font-family:"Liberation Mono", monospace;transform:scaleX(1.0004);-webkit-text-stroke:0.18px;'>(req.query.name || (req.body &amp;&amp; req.body.name)) {</span>
<span style='left:175.148px;top:123.72px;font-size:5.75px;line-height:6.9px;color:#2b91af;font-family:"Liberation Mono", monospace;transform:scaleX(0.9997);-webkit-text-stroke:0.12px;'>5</span>
<span style='left:211.42px;top:123.72px;font-size:5.75px;line-height:6.9px;color:#000000;font-family:"Liberation Mono", monospace;transform:scaleX(1.0003);-webkit-text-stroke:0.18px;'>context.res = {</span>
<span style='left:175.148px;top:131.84px;font-size:5.75px;line-height:6.9px;color:#2b91af;font-family:"Liberation Mono", monospace;transform:scaleX(0.9997);-webkit-text-stroke:0.12px;'>6</span>
<span style='left:225.22px;top:131.84px;font-size:5.75px;line-height:6.9px;color:#008000;font-family:"Liberation Mono", monospace;transform:scaleX(1.0004);-webkit-text-stroke:0.18px;'>// status: 200, /* Defaults to 200 */</span>
<span style='left:175.148px;top:139.97px;font-size:5.75px;line-height:6.9px;color:#2b91af;font-family:"Liberation Mono", monospace;transform:scaleX(0.9997);-webkit-text-stroke:0.12px;'>7</span>
<span style='left:225.22px;top:139.97px;font-size:5.75px;line-height:6.9px;color:#000000;font-family:"Liberation Mono", monospace;transform:scaleX(0.9996);-webkit-text-stroke:0.18px;'>body: </span>
<span style='left:245.94px;top:139.97px;font-size:5.75px;line-height:6.9px;color:#a31515;font-family:"Liberation Mono", monospace;transform:scaleX(1.0004);-webkit-text-stroke:0.18px;'>&quot;Hello &quot;</span>
<span style='left:277.0px;top:139.97px;font-size:5.75px;line-height:6.9px;color:#000000;font-family:"Liberation Mono", monospace;transform:scaleX(1.0003);-webkit-text-stroke:0.18px;'>+ (req.query.name || req.body.name)</span>
<span style='left:175.148px;top:148.09px;font-size:5.75px;line-height:6.9px;color:#2b91af;font-family:"Liberation Mono", monospace;transform:scaleX(0.9997);-webkit-text-stroke:0.12px;'>8</span>
<span style='left:211.42px;top:148.09px;font-size:5.75px;line-height:6.9px;color:#000000;font-family:"Liberation Mono", monospace;transform:scaleX(0.9991);-webkit-text-stroke:0.18px;'>};</span>
<span style='left:175.148px;top:156.22px;font-size:5.75px;line-height:6.9px;color:#2b91af;font-family:"Liberation Mono", monospace;transform:scaleX(0.9997);-webkit-text-stroke:0.12px;'>9</span>
<span style='left:197.61px;top:156.22px;font-size:5.75px;line-height:6.9px;color:#000000;font-family:"Liberation Mono", monospace;transform:scaleX(0.9991);-webkit-text-stroke:0.18px;'>}</span>
<span style='left:171.696px;top:164.34px;font-size:5.75px;line-height:6.9px;color:#2b91af;font-family:"Liberation Mono", monospace;transform:scaleX(0.9997);-webkit-text-stroke:0.12px;'>10</span>
<span style='left:197.61px;top:164.34px;font-size:5.75px;line-height:6.9px;color:#0000ff;font-family:"Liberation Mono", monospace;transform:scaleX(0.9998);-webkit-text-stroke:0.18px;'>else</span>
<span style='left:214.87px;top:164.34px;font-size:5.75px;line-height:6.9px;color:#000000;font-family:"Liberation Mono", monospace;transform:scaleX(0.9991);-webkit-text-stroke:0.18px;'>{</span>
<span style='left:171.696px;top:172.47px;font-size:5.75px;line-height:6.9px;color:#2b91af;font-family:"Liberation Mono", monospace;transform:scaleX(0.9997);-webkit-text-stroke:0.12px;'>11</span>
<span style='left:211.42px;top:172.47px;font-size:5.75px;line-height:6.9px;color:#000000;font-family:"Liberation Mono", monospace;transform:scaleX(1.0003);-webkit-text-stroke:0.18px;'>context.res = {</span>
<span style='left:171.696px;top:180.59px;font-size:5.75px;line-height:6.9px;color:#2b91af;font-family:"Liberation Mono", monospace;transform:scaleX(0.9997);-webkit-text-stroke:0.12px;'>12</span>
<span style='left:225.22px;top:180.59px;font-size:5.75px;line-height:6.9px;color:#000000;font-family:"Liberation Mono", monospace;transform:scaleX(1.0004);-webkit-text-stroke:0.18px;'>status: </span>
<span style='left:252.84px;top:180.59px;font-size:5.75px;line-height:6.9px;color:#09885a;font-family:"Liberation Mono", monospace;transform:scaleX(1.0001);-webkit-text-stroke:0.18px;'>400</span>
<span style='left:263.2px;top:180.59px;font-size:5.75px;line-height:6.9px;color:#000000;font-family:"Liberation Mono", monospace;transform:scaleX(0.9991);-webkit-text-stroke:0.18px;'>,</span>
<span style='left:171.696px;top:188.72px;font-size:5.75px;line-height:6.9px;color:#2b91af;font-family:"Liberation Mono", monospace;transform:scaleX(0.9997);-webkit-text-stroke:0.12px;'>13</span>
<span style='left:225.22px;top:188.72px;font-size:5.75px;line-height:6.9px;color:#000000;font-family:"Liberation Mono", monospace;transform:scaleX(0.9996);-webkit-text-stroke:0.18px;'>body: </span>
<span style='left:245.94px;top:188.72px;font-size:5.75px;line-height:6.9px;color:#a31515;font-family:"Liberation Mono", monospace;transform:scaleX(1.0004);-webkit-text-stroke:0.18px;'>&quot;Please pass a name on the query string or in the request body&quot;</span>
<span style='left:171.696px;top:196.84px;font-size:5.75px;line-height:6.9px;color:#2b91af;font-family:"Liberation Mono", monospace;transform:scaleX(0.9997);-webkit-text-stroke:0.12px;'>14</span>
<span style='left:211.42px;top:196.84px;font-size:5.75px;line-height:6.9px;color:#000000;font-family:"Liberation Mono", monospace;transform:scaleX(0.9991);-webkit-text-stroke:0.18px;'>};</span>
<span style='left:171.696px;top:204.97px;font-size:5.75px;line-height:6.9px;color:#2b91af;font-family:"Liberation Mono", monospace;transform:scaleX(0.9997);-webkit-text-stroke:0.12px;'>15</span>
<span style='left:197.61px;top:204.97px;font-size:5.75px;line-height:6.9px;color:#000000;font-family:"Liberation Mono", monospace;transform:scaleX(0.9991);-webkit-text-stroke:0.18px;'>}</span>
<span style='left:171.696px;top:213.09px;font-size:5.75px;line-height:6.9px;color:#2b91af;font-family:"Liberation Mono", monospace;transform:scaleX(0.9997);-webkit-text-stroke:0.12px;'>16</span>
<span style='left:197.61px;top:213.09px;font-size:5.75px;line-height:6.9px;color:#000000;font-family:"Liberation Mono", monospace;transform:scaleX(1.0003);-webkit-text-stroke:0.18px;'>context.done();</span>
<span style='left:171.696px;top:221.22px;font-size:5.75px;line-height:6.9px;color:#2b91af;font-family:"Liberation Mono", monospace;transform:scaleX(0.9997);-webkit-text-stroke:0.12px;'>17</span>
<span style='left:183.8px;top:221.22px;font-size:5.75px;line-height:6.9px;color:#000000;font-family:"Liberation Mono", monospace;transform:scaleX(0.9991);-webkit-text-stroke:0.18px;'>};</span>
<span style='left:164px;top:302.59px;font-size:6.4px;line-height:7.68px;color:#222;transform:scaleX(0.9452);-webkit-text-stroke:0.12px;'>Logs</span>
<span style='left:164.4px;top:320.45px;font-size:5.6px;line-height:6.72px;color:#6e6e6e;font-family:"Liberation Mono", monospace;transform:scaleX(1.0237);'>2017-07-06T03:30:48  Welcome, you are now connected to log-streaming service.</span>
<span style='left:372.2px;top:303.54px;font-size:5.8px;line-height:6.96px;color:#0a52ac;transform:scaleX(0.8882);-webkit-text-stroke:0.2px;'>Pause</span>
<span style='left:399.6px;top:303.54px;font-size:5.8px;line-height:6.96px;color:#0a52ac;transform:scaleX(0.8731);-webkit-text-stroke:0.2px;'>Clear</span>
<span style='left:424.5px;top:303.54px;font-size:5.8px;line-height:6.96px;color:#0a52ac;transform:scaleX(0.9425);-webkit-text-stroke:0.2px;'>Copy logs</span>
<span style='left:460.8px;top:303.54px;font-size:5.8px;line-height:6.96px;color:#0a52ac;transform:scaleX(0.9099);-webkit-text-stroke:0.2px;'>Expand</span>
<span style='left:521.9px;top:78.72px;font-size:6.6px;line-height:7.92px;color:#222;transform:scaleX(0.9952);'>View files</span>
<span style='left:560.1px;top:78.72px;font-size:6.6px;line-height:7.92px;color:#0a52ac;transform:scaleX(0.9261);'>Test</span>
<span style='left:527.2px;top:98.79px;font-size:6.4px;line-height:7.68px;color:#0a52ac;transform:scaleX(0.9407);-webkit-text-stroke:0.22px;'>Add</span>
<span style='left:552.9px;top:98.79px;font-size:6.4px;line-height:7.68px;color:#0a52ac;transform:scaleX(1.0017);-webkit-text-stroke:0.22px;'>Upload</span>
<span style='left:590.7px;top:98.79px;font-size:6.4px;line-height:7.68px;color:#0a52ac;transform:scaleX(0.9954);-webkit-text-stroke:0.22px;'>Delete</span>
<span style='left:522.8px;top:123.63px;font-size:5.9px;line-height:7.08px;color:#2b2b2b;transform:scaleX(0.9364);'>HttpTriggerJS1</span>
<span style='left:531.4px;top:136.13px;font-size:5.9px;line-height:7.08px;color:#2b2b2b;transform:scaleX(0.9795);'>function.json</span>
<span style='left:531.4px;top:153.23px;font-size:5.9px;line-height:7.08px;color:#2b2b2b;transform:scaleX(0.9507);'>index.js</span>
</div></div></body></html>
